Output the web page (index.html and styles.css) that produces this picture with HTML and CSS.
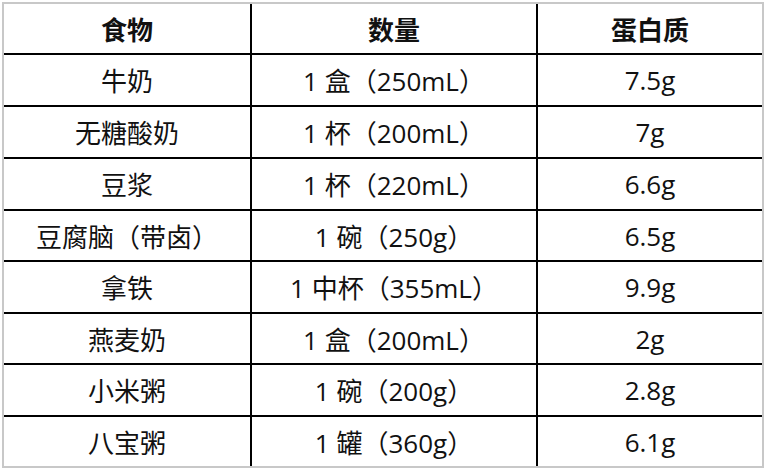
FILE: index.html
```html
<!DOCTYPE html>
<html lang="zh-CN">
<head>
<meta charset="utf-8">
<title>蛋白质含量</title>
<link rel="stylesheet" href="styles.css">
</head>
<body>
<div class="grid">
  <div class="cell head">食物</div><div class="cell head">数量</div><div class="cell head">蛋白质</div>
  <div class="cell">牛奶</div><div class="cell">1 盒（250mL）</div><div class="cell">7.5g</div>
  <div class="cell">无糖酸奶</div><div class="cell">1 杯（200mL）</div><div class="cell">7g</div>
  <div class="cell">豆浆</div><div class="cell">1 杯（220mL）</div><div class="cell">6.6g</div>
  <div class="cell">豆腐脑（带卤）</div><div class="cell">1 碗（250g）</div><div class="cell">6.5g</div>
  <div class="cell">拿铁</div><div class="cell">1 中杯（355mL）</div><div class="cell">9.9g</div>
  <div class="cell">燕麦奶</div><div class="cell">1 盒（200mL）</div><div class="cell">2g</div>
  <div class="cell">小米粥</div><div class="cell">1 碗（200g）</div><div class="cell">2.8g</div>
  <div class="cell">八宝粥</div><div class="cell">1 罐（360g）</div><div class="cell">6.1g</div>
</div>
</body>
</html>
```
FILE: styles.css
```css
html, body {
  margin: 0;
  background: #fff;
}
body {
  padding: 2px;
}
.grid {
  display: grid;
  width: 762px;
  box-sizing: border-box;
  border: 2px solid #c8c8c8;
  background: #000;
  gap: 2px;
  grid-template-columns: 246px 284px 224px;
  grid-template-rows: 49px 50px 50px 50px 49px 50px 49px 50px 49px;
  font-family: "Open Sans", "Noto Sans CJK SC", sans-serif;
  font-size: 26px;
  color: #111;
}
.cell {
  background: #fff;
  display: flex;
  align-items: center;
  justify-content: center;
  white-space: nowrap;
}
.head {
  font-weight: 700;
}
```
